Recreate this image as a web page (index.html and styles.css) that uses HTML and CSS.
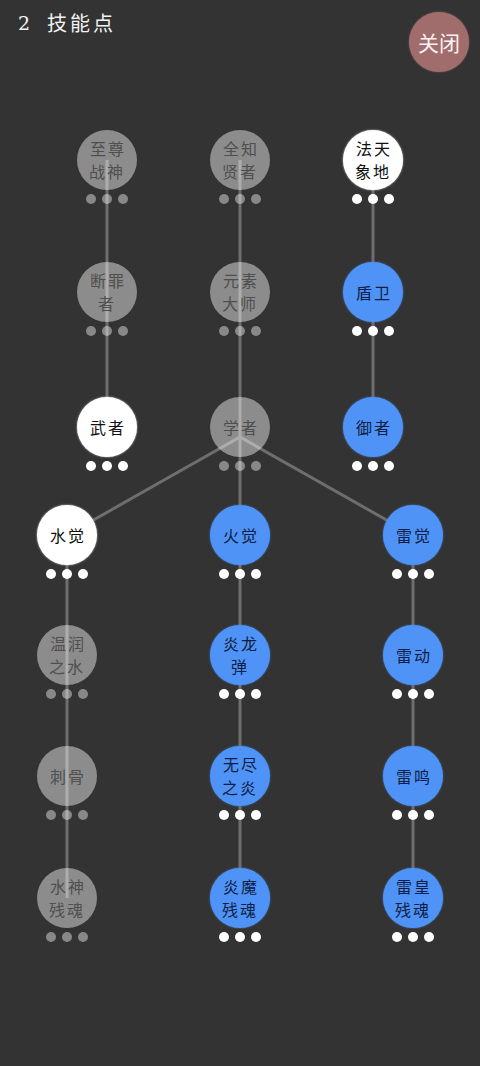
FILE: index.html
```html
<!DOCTYPE html>
<html lang="zh">
<head>
<meta charset="utf-8">
<title>技能点</title>
<link rel="stylesheet" href="styles.css">
</head>
<body>
<div class="page">
  <div class="tree">
    <svg class="links" width="480" height="1066" viewBox="0 0 480 1066">
      <g stroke="#6e6e6e" stroke-width="3" fill="none">
        <line x1="107" y1="160" x2="107" y2="427"/>
        <line x1="240" y1="160" x2="240" y2="427"/>
        <line x1="373" y1="160" x2="373" y2="427"/>
        <line x1="240" y1="437" x2="67" y2="535"/>
        <line x1="240" y1="427" x2="240" y2="535"/>
        <line x1="240" y1="437" x2="413" y2="535"/>
        <line x1="67" y1="535" x2="67" y2="898"/>
        <line x1="240" y1="535" x2="240" y2="898"/>
        <line x1="413" y1="535" x2="413" y2="898"/>
      </g>
    </svg>

    <div class="node locked cx107 r1"><div class="orb">至尊<br>战神</div><div class="dots"><i></i><i></i><i></i></div></div>
    <div class="node locked cx240 r1"><div class="orb">全知<br>贤者</div><div class="dots"><i></i><i></i><i></i></div></div>
    <div class="node white cx373 r1"><div class="orb">法天<br>象地</div><div class="dots"><i></i><i></i><i></i></div></div>

    <div class="node locked cx107 r2"><div class="orb">断罪<br>者</div><div class="dots"><i></i><i></i><i></i></div></div>
    <div class="node locked cx240 r2"><div class="orb">元素<br>大师</div><div class="dots"><i></i><i></i><i></i></div></div>
    <div class="node blue cx373 r2"><div class="orb">盾卫</div><div class="dots"><i></i><i></i><i></i></div></div>

    <div class="node white cx107 r3"><div class="orb">武者</div><div class="dots"><i></i><i></i><i></i></div></div>
    <div class="node locked cx240 r3"><div class="orb">学者</div><div class="dots"><i></i><i></i><i></i></div></div>
    <div class="node blue cx373 r3"><div class="orb">御者</div><div class="dots"><i></i><i></i><i></i></div></div>

    <div class="node white cx67 r4"><div class="orb">水觉</div><div class="dots"><i></i><i></i><i></i></div></div>
    <div class="node blue cx240 r4"><div class="orb">火觉</div><div class="dots"><i></i><i></i><i></i></div></div>
    <div class="node blue cx413 r4"><div class="orb">雷觉</div><div class="dots"><i></i><i></i><i></i></div></div>

    <div class="node locked cx67 r5"><div class="orb">温润<br>之水</div><div class="dots"><i></i><i></i><i></i></div></div>
    <div class="node blue cx240 r5"><div class="orb">炎龙<br>弹</div><div class="dots"><i></i><i></i><i></i></div></div>
    <div class="node blue cx413 r5"><div class="orb">雷动</div><div class="dots"><i></i><i></i><i></i></div></div>

    <div class="node locked cx67 r6"><div class="orb">刺骨</div><div class="dots"><i></i><i></i><i></i></div></div>
    <div class="node blue cx240 r6"><div class="orb">无尽<br>之炎</div><div class="dots"><i></i><i></i><i></i></div></div>
    <div class="node blue cx413 r6"><div class="orb">雷鸣</div><div class="dots"><i></i><i></i><i></i></div></div>

    <div class="node locked cx67 r7"><div class="orb">水神<br>残魂</div><div class="dots"><i></i><i></i><i></i></div></div>
    <div class="node blue cx240 r7"><div class="orb">炎魔<br>残魂</div><div class="dots"><i></i><i></i><i></i></div></div>
    <div class="node blue cx413 r7"><div class="orb">雷皇<br>残魂</div><div class="dots"><i></i><i></i><i></i></div></div>
  </div>

  <header class="topbar">
    <div class="title"><span class="num">2</span><span class="label">技能点</span></div>
    <div class="close">关闭</div>
  </header>
</div>
</body>
</html>
```

FILE: styles.css
```css
html, body {
  margin: 0;
  padding: 0;
  background: #333333;
}

.page {
  position: relative;
  width: 480px;
  height: 1066px;
  overflow: hidden;
  font-family: "Noto Sans CJK SC", "Noto Sans", sans-serif;
}

.topbar {
  position: relative;
  display: flex;
  justify-content: space-between;
  align-items: flex-start;
  padding: 10px 11px 0 18px;
}

.title {
  display: flex;
  align-items: center;
  gap: 17px;
  color: #f2f2f2;
  font-size: 20px;
  line-height: 26px;
  padding-top: 0;
}

.title .num {
  font-family: "DejaVu Serif", "Liberation Serif", serif;
  font-size: 19px;
}

.title .label {
  letter-spacing: 3px;
}

.close {
  width: 60px;
  height: 60px;
  margin-top: 2px;
  border-radius: 50%;
  background: #a16c6c;
  color: #fbf3f3;
  font-size: 21px;
  display: flex;
  align-items: center;
  justify-content: center;
  box-shadow: 0 0 2px rgba(161, 108, 108, 0.8);
}

.tree {
  position: absolute;
  left: 0;
  top: 0;
  width: 480px;
  height: 1066px;
}

.links {
  position: absolute;
  left: 0;
  top: 0;
}

.node {
  position: absolute;
  width: 60px;
  display: flex;
  flex-direction: column;
  align-items: center;
}

.orb {
  width: 60px;
  height: 60px;
  border-radius: 50%;
  display: flex;
  align-items: center;
  justify-content: center;
  text-align: center;
  font-size: 16px;
  line-height: 23px;
  letter-spacing: 2px;
  text-indent: 2px;
}

.dots {
  display: flex;
  gap: 6px;
  margin-top: 4px;
}

.dots i {
  display: block;
  width: 10px;
  height: 10px;
  border-radius: 50%;
  background: #ffffff;
}

.white .orb {
  background: #ffffff;
  color: #111111;
  box-shadow: 0 0 2px rgba(255, 255, 255, 0.8);
}

.blue .orb {
  background: #4f93f7;
  color: #0f1e44;
  box-shadow: 0 0 2px rgba(79, 147, 247, 0.8);
}

.locked .orb {
  background: rgba(255, 255, 255, 0.44);
  color: #4f4f4f;
}

.locked .dots i {
  background: rgba(255, 255, 255, 0.42);
}

/* column centers */
.cx67 { left: 37px; }
.cx107 { left: 77px; }
.cx240 { left: 210px; }
.cx373 { left: 343px; }
.cx413 { left: 383px; }

/* row centers */
.r1 { top: 130px; }
.r2 { top: 262px; }
.r3 { top: 397px; }
.r4 { top: 505px; }
.r5 { top: 625px; }
.r6 { top: 746px; }
.r7 { top: 868px; }
```
